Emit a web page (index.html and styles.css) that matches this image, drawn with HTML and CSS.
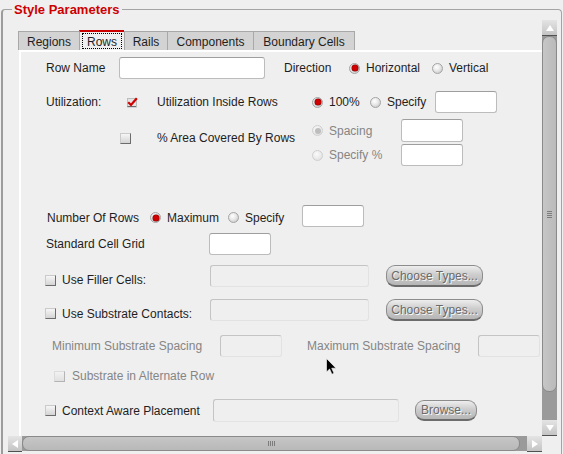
FILE: index.html
```html
<!DOCTYPE html>
<html>
<head>
<meta charset="utf-8">
<link rel="stylesheet" href="styles.css">
</head>
<body>
<div class="frame">
  <div class="title">Style Parameters</div>
  <div class="top">
    <div class="viewport">
      <div class="tabs">
        <div class="tab t-regions">Regions</div>
        <div class="tab t-rows sel"><span class="focus">Rows</span></div>
        <div class="tab t-rails">Rails</div>
        <div class="tab t-comp">Components</div>
        <div class="tab t-bound last">Boundary Cells</div>
      </div>
      <div class="panel">
        <div class="row r1">
          <span class="lbl ml25 w73">Row Name</span>
          <span class="input w146"></span>
          <span class="lbl ml19 w65">Direction</span>
          <span class="radio on"></span><span class="lbl w66">Horizontal</span>
          <span class="radio"></span><span class="lbl">Vertical</span>
        </div>
        <div class="row r2">
          <span class="lbl ml25 w80">Utilization:</span>
          <svg class="chkon" width="12" height="12" viewBox="0 0 12 12"><rect x="1.5" y="2.5" width="9" height="8.5" fill="#e4e4e4" stroke="#bdbdbd"/><path d="M10 10.5 H1.5" stroke="#6c6c6c"/><path d="M2.2 6.3 L5 9 L10.8 2.2" fill="none" stroke="#d00000" stroke-width="2.2"/></svg>
          <span class="lbl ml19 w155">Utilization Inside Rows</span>
          <span class="radio on"></span><span class="lbl w41">100%</span>
          <span class="radio"></span><span class="lbl w48">Specify</span>
          <span class="input w62"></span>
        </div>
        <div class="row r3">
          <div class="r3left">
            <span class="chk ml99"></span>
            <span class="lbl ml26 w155">% Area Covered By Rows</span>
          </div>
          <div class="stack">
            <div class="sub sub1">
              <span class="radio dis on"></span><span class="lbl dtxt w72">Spacing</span>
              <span class="input w62 h23"></span>
            </div>
            <div class="sub sub2">
              <span class="radio dis"></span><span class="lbl dtxt w72">Specify %</span>
              <span class="input w62"></span>
            </div>
          </div>
        </div>
        <div class="row r4">
          <span class="lbl low ml26 w103">Number Of Rows</span>
          <span class="radio low on"></span><span class="lbl low w61">Maximum</span>
          <span class="radio low"></span><span class="lbl low w57">Specify</span>
          <span class="input w62"></span>
        </div>
        <div class="row r5">
          <span class="lbl ml25 w163">Standard Cell Grid</span>
          <span class="input w62"></span>
        </div>
        <div class="row r6">
          <span class="chk low8 ml24"></span>
          <span class="lbl low8 ml6 w148">Use Filler Cells:</span>
          <span class="input dis w159"></span>
          <span class="btn ml17 w97">Choose Types...</span>
        </div>
        <div class="row r7">
          <span class="chk low7 ml24"></span>
          <span class="lbl low7 ml6 w148">Use Substrate Contacts:</span>
          <span class="input dis w159"></span>
          <span class="btn ml17 w97">Choose Types...</span>
        </div>
        <div class="row r8">
          <span class="lbl dtxt ml31 w168">Minimum Substrate Spacing</span>
          <span class="input dis w62"></span>
          <span class="lbl dtxt ml25 w171">Maximum Substrate Spacing</span>
          <span class="input dis w62"></span>
        </div>
        <div class="row r9">
          <span class="chk dis ml33"></span>
          <span class="lbl dtxt ml7">Substrate in Alternate Row</span>
        </div>
        <div class="row r10">
          <span class="chk ml24"></span>
          <span class="lbl ml6 w151">Context Aware Placement</span>
          <span class="input dis w186 h23"></span>
          <span class="btn ml16 w62 h21">Browse...</span>
        </div>
      </div>
    </div>
    <div class="vscroll">
      <div class="vbtn"><svg width="8" height="6" viewBox="0 0 8 6"><path d="M4 0 L8 6 H0 Z" fill="#fff"/></svg></div>
      <div class="vtrough"><div class="vthumb"><span class="vgrip"></span></div></div>
      <div class="vbtn"><svg width="8" height="6" viewBox="0 0 8 6"><path d="M0 0 H8 L4 6 Z" fill="#fff"/></svg></div>
    </div>
  </div>
  <div class="hscroll">
    <div class="hbtn hl"><svg width="6" height="8" viewBox="0 0 6 8"><path d="M0 4 L6 0 V8 Z" fill="#fff"/></svg></div>
    <div class="htrough"><div class="hthumb"><span class="hgrip"></span></div></div>
    <div class="hbtn hr"><svg width="6" height="8" viewBox="0 0 6 8"><path d="M0 0 L6 4 L0 8 Z" fill="#fff"/></svg></div>
  </div>
</div>
<svg class="cursor" width="11" height="17" viewBox="0 0 11 17"><path d="M0.5 0.5 V14 L3.6 11 L6 16.2 L8 15.3 L5.7 10.2 H10 Z" fill="#000" stroke="#fff" stroke-width="0.6"/></svg>
</body>
</html>
```
FILE: styles.css
```css
* { box-sizing: border-box; }
html, body { margin: 0; padding: 0; }
body {
  width: 563px;
  height: 454px;
  overflow: hidden;
  position: relative;
  background: #efefef;
  font-family: "Liberation Sans", Arial, sans-serif;
  font-size: 12px;
  color: #1e1e1e;
}
.frame {
  position: relative;
  margin: 9px 0 0 1px;
  width: 561px;
  height: 460px;
  border-left: 2px solid #9c9c9c;
  border-top: 1px solid #a4a4a4;
  border-right: 1px solid #a4a4a4;
  border-radius: 4px 4px 0 0;
  display: flex;
  flex-direction: column;
}
.title {
  position: absolute;
  top: -8px;
  left: 9px;
  padding: 0 2px;
  background: #efefef;
  color: #cc0000;
  font-weight: bold;
  font-size: 13px;
  line-height: 15px;
}
.top { display: flex; height: 426px; flex: none; }
.viewport {
  width: 539px;
  height: 426px;
  overflow: hidden;
  padding-left: 15px;
  flex: none;
}
.tabs {
  display: flex;
  align-items: flex-end;
  height: 20px;
  margin-top: 20px;
}
.tab {
  flex: none;
  height: 19px;
  padding-top: 2px;
  border: 1px solid #a8a8a8;
  border-bottom: none;
  border-right: none;
  background: #d3d3d3;
  display: flex;
  align-items: center;
  justify-content: center;
  line-height: 14px;
  white-space: nowrap;
}
.tab.last { border-right: 1px solid #a8a8a8; }
.tab.sel {
  height: 20px;
  padding-top: 0;
  border-top: 2px solid #cc0000;
  background: #efefef;
}
.focus {
  display: flex;
  align-items: center;
  height: 16px;
  padding: 1px 4px 0;
  border: 1px dotted #000;
}
.t-regions { width: 61px; }
.t-rows { width: 45px; }
.t-rails { width: 43px; }
.t-comp { width: 86px; }
.t-bound { width: 102px; }

.panel {
  margin-left: 1px;
  width: 560px;
  height: 386px;
  border-top: 2px solid #fff;
  border-left: 2px solid #fff;
}
.row { display: flex; align-items: center; height: 22px; }
.r1 { margin-top: 5px; }
.r2 { margin-top: 12px; }
.r3 { margin-top: 6px; height: 47px; align-items: flex-start; }
.r4 { margin-top: 39px; }
.r5 { margin-top: 6px; }
.r6 { margin-top: 10px; }
.r7 { margin-top: 12px; }
.r8 { margin-top: 14px; }
.r9 { margin-top: 9px; height: 20px; }
.r10 { margin-top: 13px; height: 23px; }
.low { margin-top: 3px; }
.low7 { margin-top: 7px; }
.low8 { margin-top: 8px; }

.r3left { display: flex; align-items: center; height: 38px; }
.stack { display: flex; flex-direction: column; }
.sub { display: flex; align-items: center; }
.sub1 { height: 23px; }
.sub2 { height: 22px; margin-top: 2px; }

.lbl { flex: none; line-height: 14px; white-space: nowrap; }
.dtxt { color: #858585; }
.input {
  flex: none;
  height: 22px;
  background: #fff;
  border: 1px solid #bcbcbc;
  border-top-color: #9e9e9e;
  border-radius: 3px;
}
.input.dis {
  background: #efefef;
  border-color: #c4c4c4 #e2e2e2 #e2e2e2 #c4c4c4;
}
.radio {
  flex: none;
  position: relative;
  width: 11px;
  height: 11px;
  margin-right: 6px;
  border-radius: 50%;
  border: 1px solid #a4a4a4;
  background: radial-gradient(circle at 40% 35%, #ffffff 0%, #e8e8e8 45%, #bcbcbc 100%);
}
.radio.on::after {
  content: "";
  position: absolute;
  left: 1.5px;
  top: 1.5px;
  width: 6px;
  height: 6px;
  border-radius: 50%;
  background: #d00000;
  box-shadow: 0 0 0 0.5px #700000;
}
.radio.dis {
  border-color: #d0d0d0;
  background: radial-gradient(circle at 40% 35%, #fafafa 0%, #ececec 50%, #d8d8d8 100%);
}
.radio.dis.on::after { background: #bdbdbd; box-shadow: none; }
.chkon { flex: none; display: block; }
.chk {
  flex: none;
  width: 11px;
  height: 11px;
  border: 1px solid;
  border-color: #cacaca #6c6c6c #6c6c6c #cacaca;
  background: linear-gradient(#f6f6f6, #d4d4d4);
}
.chk.dis {
  border-color: #dcdcdc #b4b4b4 #b4b4b4 #dcdcdc;
  background: linear-gradient(#f2f2f2, #e0e0e0);
}
.btn {
  flex: none;
  height: 22px;
  border: 1px solid #8c8c8c;
  border-bottom: 2px solid #6c6c6c;
  border-radius: 9px;
  background: linear-gradient(#eeeeee, #cdcdcd 45%, #b6b6b6);
  color: #6a6a6a;
  text-shadow: 1px 1px 0 #f8f8f8;
  display: flex;
  align-items: center;
  justify-content: center;
  white-space: nowrap;
  line-height: 14px;
}
.h21 { height: 21px; }
.h23 { height: 23px; }

.ml6 { margin-left: 6px; }
.ml7 { margin-left: 7px; }
.ml16 { margin-left: 16px; }
.ml17 { margin-left: 17px; }
.ml19 { margin-left: 19px; }
.ml24 { margin-left: 24px; }
.ml25 { margin-left: 25px; }
.ml26 { margin-left: 26px; }
.ml31 { margin-left: 31px; }
.ml33 { margin-left: 33px; }
.ml99 { margin-left: 99px; }
.w41 { width: 41px; }
.w48 { width: 48px; }
.w57 { width: 57px; }
.w61 { width: 61px; }
.w62 { width: 62px; }
.w65 { width: 65px; }
.w66 { width: 66px; }
.w72 { width: 72px; }
.w73 { width: 73px; }
.w80 { width: 80px; }
.w97 { width: 97px; }
.w103 { width: 103px; }
.w146 { width: 146px; }
.w148 { width: 148px; }
.w151 { width: 151px; }
.w155 { width: 155px; }
.w159 { width: 159px; }
.w163 { width: 163px; }
.w168 { width: 168px; }
.w171 { width: 171px; }
.w186 { width: 186px; }

.vscroll {
  flex: none;
  width: 15px;
  height: 416px;
  margin-top: 10px;
  display: flex;
  flex-direction: column;
}
.vbtn {
  flex: none;
  height: 16px;
  border-bottom: 1px solid #505050;
  background: linear-gradient(#e4e4e4, #c4c4c4);
  display: flex;
  align-items: center;
  justify-content: center;
}
.vbtn svg, .hbtn svg { display: block; }
.vtrough { flex: 1; background: #9a9a9a; }
.vthumb {
  height: 356px;
  border: 1px solid #8a8a8a;
  border-radius: 7px;
  background: linear-gradient(90deg, #c6c6c6, #bababa);
  display: flex;
  align-items: center;
  justify-content: center;
}
.vgrip {
  width: 5px;
  height: 7px;
  background: repeating-linear-gradient(#7c7c7c 0 1px, transparent 1px 2px);
}
.hscroll {
  flex: none;
  display: flex;
  margin-left: 5px;
  width: 534px;
  height: 16px;
}
.hbtn {
  flex: none;
  height: 16px;
  border-bottom: 1px solid #505050;
  background: linear-gradient(#e4e4e4, #c4c4c4);
  display: flex;
  align-items: center;
  justify-content: center;
}
.hl { width: 14px; }
.hr { width: 15px; }
.htrough { flex: 1; height: 15px; background: #9a9a9a; display: flex; }
.hthumb {
  width: 498px;
  border: 1px solid #8a8a8a;
  border-radius: 7px;
  background: linear-gradient(#c6c6c6, #b8b8b8);
  display: flex;
  align-items: center;
  justify-content: center;
}
.hgrip {
  width: 7px;
  height: 5px;
  background: repeating-linear-gradient(90deg, #7c7c7c 0 1px, transparent 1px 2px);
}
.cursor {
  position: absolute;
  left: 326px;
  top: 358px;
}
```
